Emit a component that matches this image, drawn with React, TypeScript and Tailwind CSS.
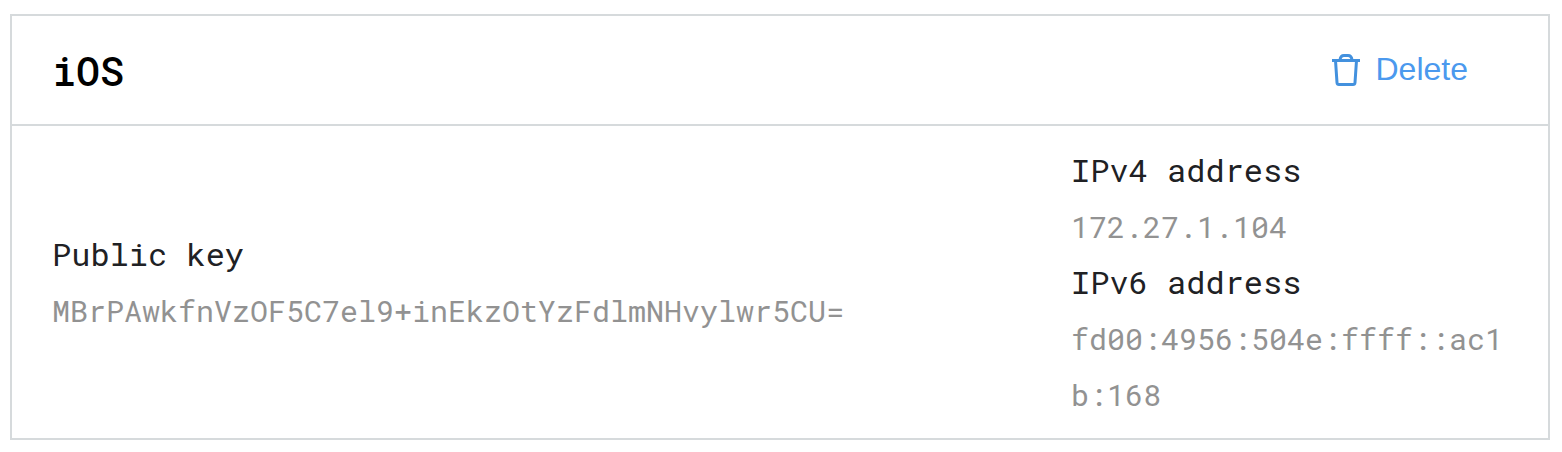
type FieldProps = { label: string; value: string };

function Field({ label, value }: FieldProps) {
  return (
    <div>
      <dt className="text-[32px] leading-[56px] text-[#202124]">{label}</dt>
      <dd className="pt-px text-[30px] leading-[56px] -mb-px break-all text-[#929292]">{value}</dd>
    </div>
  );
}

function TrashIcon() {
  return (
    <svg width="28" height="32" viewBox="0 0 28 32" fill="none" stroke="#4391de" strokeWidth="3" aria-hidden="true">
      <path d="M0 6.5H28" />
      <path d="M8 6.5V5.8C8.3 3.2 9.7 1.5 12 1.5H16C18.3 1.5 19.7 3.2 20 5.8V6.5" />
      <path d="M3.5 6.5L5 28.6Q5.2 30.5 7 30.5H21Q22.8 30.5 23 28.6L24.5 6.5" />
    </svg>
  );
}

export default function App() {
  return (
    <main className="h-[452px] bg-white pt-[14px] pr-3 pb-3 pl-[10px]">
      <section className="flex h-full flex-col border-2 border-[#d6dadc] bg-white font-['Roboto_Mono','Liberation_Mono',monospace]">
        <header className="flex h-[110px] shrink-0 items-center justify-between border-b-2 border-[#d6dadc] pr-20 pl-10">
          <h2 className="pt-0.5 text-[40px] leading-[56px] font-medium text-black">iOS</h2>
          <button className="flex items-center gap-4 font-['Liberation_Sans',Arial,sans-serif] text-[32px] leading-10 text-[#4b99ee]">
            <TrashIcon />
            <span className="pb-0.5">Delete</span>
          </button>
        </header>
        <dl className="flex flex-1 items-center justify-between pr-[30px] pl-10">
          <Field label="Public key" value="MBrPAwkfnVzOF5C7el9+inEkzOtYzFdlmNHvylwr5CU=" />
          <div className="w-[447px]">
            <Field label="IPv4 address" value="172.27.1.104" />
            <Field label="IPv6 address" value="fd00:4956:504e:ffff::ac1b:168" />
          </div>
        </dl>
      </section>
    </main>
  );
}
